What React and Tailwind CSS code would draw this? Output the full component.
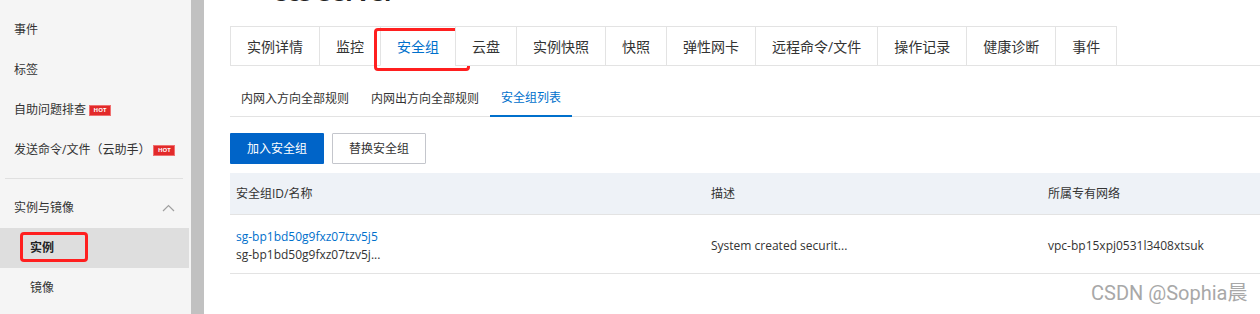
import React, { useState } from "react";

const sideItems = [
  { label: "事件" },
  { label: "标签" },
  { label: "自助问题排查", hot: true },
  { label: "发送命令/文件（云助手）", hot: true },
];

const tabs = [
  "实例详情",
  "监控",
  "安全组",
  "云盘",
  "实例快照",
  "快照",
  "弹性网卡",
  "远程命令/文件",
  "操作记录",
  "健康诊断",
  "事件",
];

const subTabs = ["内网入方向全部规则", "内网出方向全部规则", "安全组列表"];

function HotBadge() {
  return (
    <span className="ml-1 inline-flex h-[9px] w-[20px] items-center justify-center bg-[#e22a2a] outline outline-[#f07070] text-[6px] font-bold leading-none text-white">
      HOT
    </span>
  );
}

function Sidebar() {
  return (
    <div className="h-full w-[191px] shrink-0 bg-[#f5f5f5] pt-[10px] text-[12px] text-[#333]">
      {sideItems.map((item) => (
        <div key={item.label} className="flex h-10 items-center pl-[14px]">
          {item.label}
          {item.hot && <HotBadge />}
        </div>
      ))}
      <div className="mx-[5px] mt-2 w-[178px] border-t border-[#e0e0e0]" />
      <div className="mt-[9px] flex h-10 items-center justify-between pl-[14px] pr-[16px]">
        <span>实例与镜像</span>
        <svg width="13" height="8" viewBox="0 0 13 8" fill="none">
          <polyline points="1,7 6.5,1.5 12,7" stroke="#a0a0a0" strokeWidth="1.2" />
        </svg>
      </div>
      <div className="relative flex h-10 w-[189px] items-center bg-[#dedede] pl-[30px] font-bold text-[#222]">
        实例
        <div className="absolute left-[20px] top-[4px] h-[30px] w-[68px] rounded-[4px] border-[3px] border-[#ff1f1f]" />
      </div>
      <div className="flex h-10 items-center pl-[30px]">镜像</div>
    </div>
  );
}

export default function App() {
  const [activeTab, setActiveTab] = useState("安全组");
  const [activeSub, setActiveSub] = useState("安全组列表");

  return (
    <div className="relative flex h-[314px] w-[1260px] overflow-hidden bg-white font-['Open_Sans','Noto_Sans_CJK_SC',sans-serif]">
      <Sidebar />
      <div className="h-full w-[13px] shrink-0 bg-[#c1c1c1]" />

      <div className="min-w-0 flex-1 pl-[26px]">
        {/* title, mostly scrolled out of view */}
        <div className="h-[26px] overflow-hidden">
          <div className="-mt-[22px] ml-[43px] text-[24px] font-bold leading-[28px] text-[#222]">
            ecs-server
          </div>
        </div>

        <div className="flex border-b border-[#e3e3e3]">
          {tabs.map((t, i) => {
            const active = t === activeTab;
            return (
              <div
                key={t}
                onClick={() => setActiveTab(t)}
                className={
                  "relative -mb-px flex h-[40px] cursor-pointer items-center border-b border-l border-t border-t-[#e3e3e3] border-l-[#e3e3e3] bg-white px-4 text-[14px] " +
                  (active ? "border-b-white text-[#0070cc]" : "border-b-[#e3e3e3] text-[#333]") +
                  (i === tabs.length - 1 ? " border-r border-r-[#e3e3e3]" : "")
                }
              >
                {t}
                {active && (
                  <div className="absolute left-[-7px] top-[1px] h-[43px] w-[96px] rounded-[4px] border-[3px] border-[#ff1f1f]" />
                )}
              </div>
            );
          })}
        </div>

        <div className="mt-[15px] flex border-b border-[#e3e3e3]">
          {subTabs.map((s) => {
            const active = s === activeSub;
            return (
              <div
                key={s}
                onClick={() => setActiveSub(s)}
                className={
                  "-mb-px flex h-[36px] cursor-pointer items-center px-[11px] text-[12px] " +
                  (active ? "border-b-2 border-[#0070cc] text-[#0070cc]" : "text-[#333]")
                }
              >
                {s}
              </div>
            );
          })}
        </div>

        <div className="mt-4 flex gap-2">
          <button className="h-[31px] w-[94px] rounded-[1px] bg-[#0064c8] text-[12px] text-white">
            加入安全组
          </button>
          <button className="h-[31px] w-[94px] rounded-[1px] border border-[#c4c6cc] bg-white text-[12px] text-[#333]">
            替换安全组
          </button>
        </div>

        <div className="mt-[9px] text-[12px] text-[#333]">
          <div className="grid h-[42px] grid-cols-[475px_337px_1fr] items-center border-b border-[#e3e3e3] bg-[#eef2f7]">
            <div className="px-[6px]">安全组ID/名称</div>
            <div className="px-[6px]">描述</div>
            <div className="px-[6px]">所属专有网络</div>
          </div>
          <div className="grid h-[59px] grid-cols-[475px_337px_1fr] items-center border-b border-[#e3e3e3] pt-[3px] leading-[18px]">
            <div className="px-[6px]">
              <div className="text-[#0070cc]">sg-bp1bd50g9fxz07tzv5j5</div>
              <div>sg-bp1bd50g9fxz07tzv5j...</div>
            </div>
            <div className="px-[6px]">System created securit...</div>
            <div className="px-[6px]">vpc-bp15xpj0531l3408xtsuk</div>
          </div>
        </div>
      </div>

      <div className="absolute left-[1091px] top-[280px] font-['Roboto','Noto_Sans_CJK_SC',sans-serif] text-[20px] leading-[26px] text-[#a8a8a8]">
        CSDN @Sophia晨
      </div>
    </div>
  );
}
